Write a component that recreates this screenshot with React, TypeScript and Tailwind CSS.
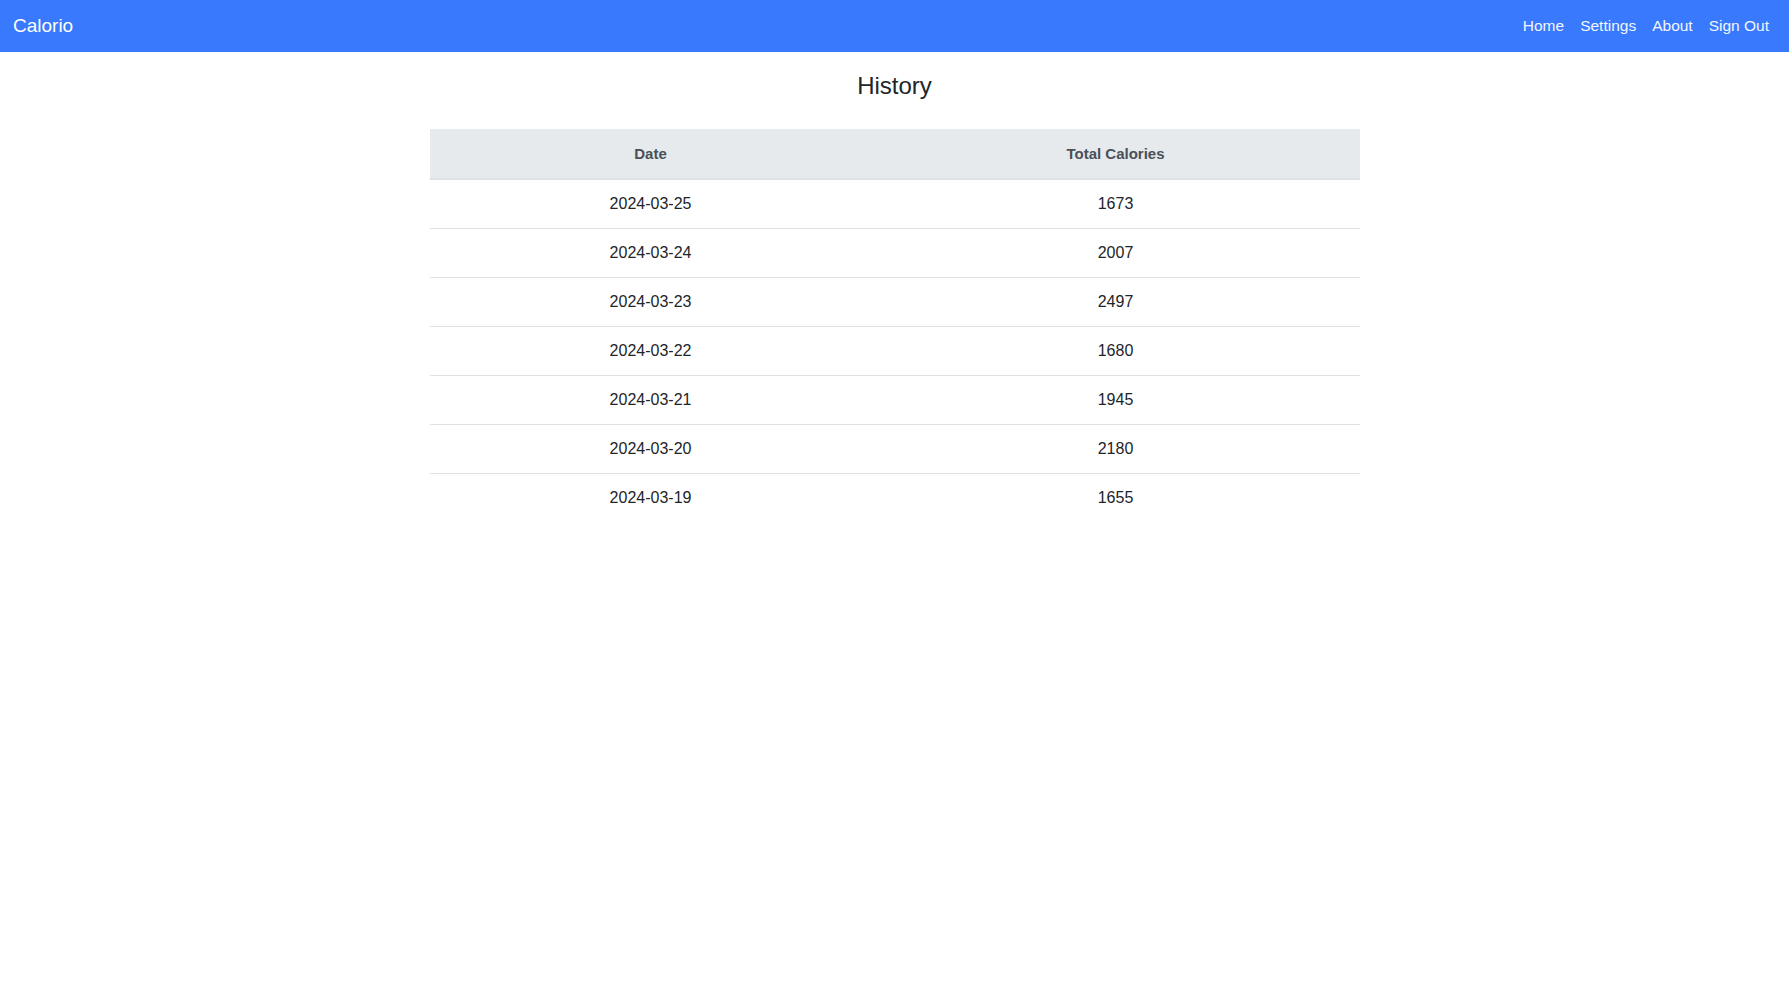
const rows = [
  { date: "2024-03-25", total: 1673 },
  { date: "2024-03-24", total: 2007 },
  { date: "2024-03-23", total: 2497 },
  { date: "2024-03-22", total: 1680 },
  { date: "2024-03-21", total: 1945 },
  { date: "2024-03-20", total: 2180 },
  { date: "2024-03-19", total: 1655 },
];

export default function App() {
  return (
    <div className="min-h-screen bg-white text-[#212529] font-['Liberation_Sans',sans-serif]">
      {/* Navbar */}
      <nav className="h-[52px] bg-[#3879fd] flex items-center justify-between pl-[13px] pr-[12px]">
        <span className="text-[19px] text-white">Calorio</span>
        <ul className="flex items-center text-[15.5px] text-[#f2f6ff]">
          {["Home", "Settings", "About", "Sign Out"].map((l) => (
            <li key={l} className="px-2">
              {l}
            </li>
          ))}
        </ul>
      </nav>

      <main className="flex flex-col items-center">
        <h1 className="mt-[19px] mb-[29px] text-[24px] leading-[29px]">History</h1>
        <table className="w-[930px] text-[16px] text-center border-collapse">
          <thead>
            <tr className="bg-[#e7eaed] text-[#495057] border-b-2 border-[#dee2e6]">
              <th className="w-[442px] h-[50px] pt-[2px] text-[15px] font-bold">Date</th>
              <th className="h-[50px] pt-[2px] text-[15px] font-bold">Total Calories</th>
            </tr>
          </thead>
          <tbody>
            {rows.map((r, i) => (
              <tr
                key={r.date}
                className={i < rows.length - 1 ? "border-b border-[#dee2e6]" : ""}
              >
                <td className="h-[49px] pt-px">{r.date}</td>
                <td className="h-[49px] pt-px">{r.total}</td>
              </tr>
            ))}
          </tbody>
        </table>
      </main>
    </div>
  );
}
